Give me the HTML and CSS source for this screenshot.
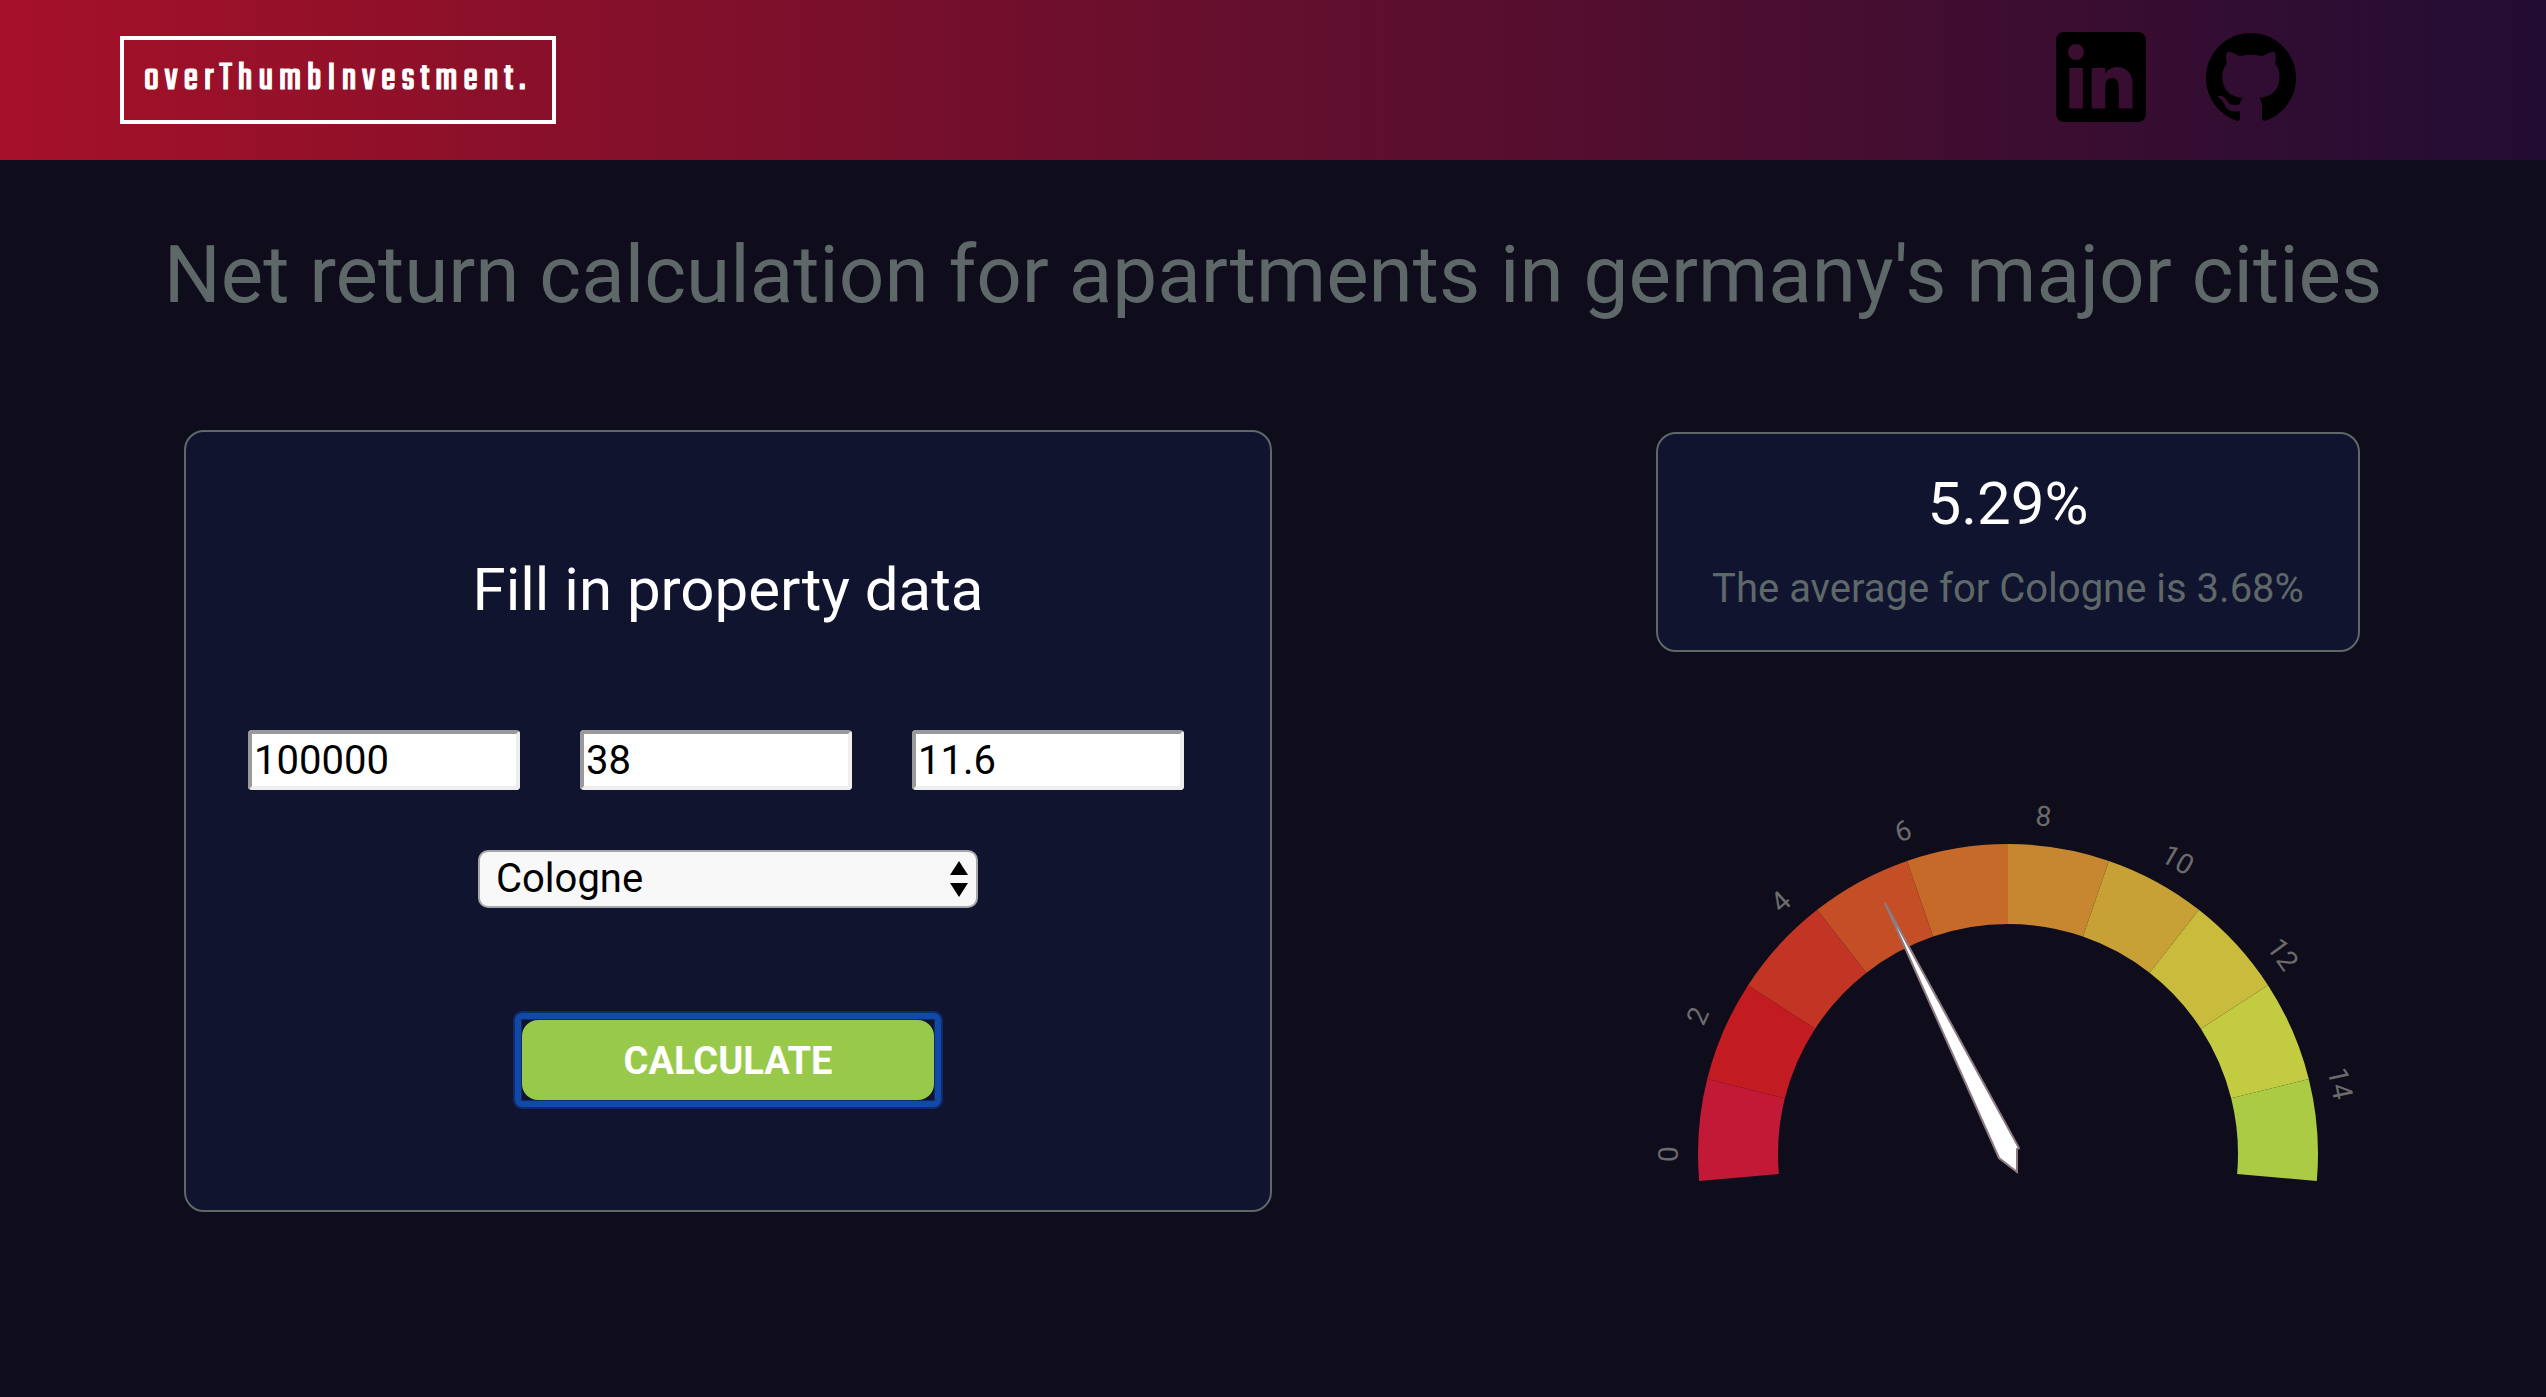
FILE: index.html
```html
<!DOCTYPE html>
<html lang="en">
<head>
<meta charset="utf-8">
<title>overThumbInvestment.</title>
<link rel="stylesheet" href="styles.css">
</head>
<body>
<header class="topbar">
  <a class="logo" href="#">overThumbInvestment.</a>
  <nav class="social">
    <a href="#" aria-label="LinkedIn"><svg class="icon" viewBox="0 0 90 90"><path fill-rule="evenodd" d="M8 0h74a8 8 0 0 1 8 8v74a8 8 0 0 1-8 8H8a8 8 0 0 1-8-8V8a8 8 0 0 1 8-8zM20 12a8 8 0 1 0 0 16a8 8 0 1 0 0-16zM13.400 36v40.400h13.400V36zM35.700 36v40.400h13.600V55C49.300 49 52 46 56 46s6.800 3 6.800 9v21.400h13.700V52C76.500 41 70 35 61 35c-5.500 0-9.500 3-11.700 7V36z"/></svg></a>
    <a href="#" aria-label="GitHub"><svg class="icon" viewBox="0 0 24 24"><path d="M12 .297c-6.63 0-12 5.373-12 12 0 5.303 3.438 9.8 8.205 11.385.6.113.82-.258.82-.577 0-.285-.01-1.04-.015-2.04-3.338.724-4.042-1.61-4.042-1.61C4.422 18.07 3.633 17.7 3.633 17.7c-1.087-.744.084-.729.084-.729 1.205.084 1.838 1.236 1.838 1.236 1.07 1.835 2.809 1.305 3.495.998.108-.776.417-1.305.76-1.605-2.665-.3-5.466-1.332-5.466-5.93 0-1.31.465-2.38 1.235-3.22-.135-.303-.54-1.523.105-3.176 0 0 1.005-.322 3.3 1.23.96-.267 1.98-.399 3-.405 1.02.006 2.04.138 3 .405 2.28-1.552 3.285-1.23 3.285-1.23.645 1.653.24 2.873.12 3.176.765.84 1.23 1.91 1.23 3.22 0 4.61-2.805 5.625-5.475 5.92.42.36.81 1.096.81 2.22 0 1.606-.015 2.896-.015 3.286 0 .315.21.69.825.57C20.565 22.092 24 17.592 24 12.297c0-6.627-5.373-12-12-12"/></svg></a>
  </nav>
</header>
<main>
  <h1 class="title">Net return calculation for apartments in germany's major cities</h1>
  <div class="columns">
    <form class="card form">
      <h2 class="form-title">Fill in property data</h2>
      <div class="fields">
        <input class="field" type="text" value="100000" aria-label="Price">
        <input class="field" type="text" value="38" aria-label="Size">
        <input class="field" type="text" value="11.6" aria-label="Rent per square meter">
      </div>
      <div class="picker">
        <select class="city" aria-label="City"><option>Cologne</option></select>
        <svg class="arrows" viewBox="0 0 18 36"><path d="M9 0l9 14H0zM0 22h18L9 36z"/></svg>
      </div>
      <button type="button" class="calculate">CALCULATE</button>
    </form>
    <section class="results">
      <div class="card result">
        <p class="rate">5.29%</p>
        <p class="average">The average for Cologne is 3.68%</p>
      </div>
      <svg class="gauge" viewBox="0 0 704 400" role="img" aria-label="Net return gauge">
        <g id="sectors" transform="translate(352 362)"></g>
        <g class="ticks" transform="translate(352 362)">
          <text transform="rotate(-90) translate(0 -330)">0</text>
          <text transform="rotate(-66) translate(0 -330)">2</text>
          <text transform="rotate(-42) translate(0 -330)">4</text>
          <text transform="rotate(-18) translate(0 -330)">6</text>
          <text transform="rotate(6) translate(0 -330)">8</text>
          <text transform="rotate(30) translate(0 -330)">10</text>
          <text transform="rotate(54) translate(0 -330)">12</text>
          <text transform="rotate(78) translate(0 -330)">14</text>
        </g>
        <path class="needle" d="M229 111L363 356L361 357V380L343 366z"/>
      </svg>
    </section>
  </div>
</main>
<script src="gauge.js"></script>
</body>
</html>
```
FILE: gauge.js
```
const colors = ["#c21a36", "#c21c22", "#c23423", "#c44f27", "#c66a2a", "#c78730", "#c8a136", "#c9bb3c", "#c3cb41", "#accb44"];
const start = 185, step = 19;
const point = (radius, degrees) => {
  const a = degrees * Math.PI / 180;
  return (radius * Math.cos(a)).toFixed(2) + " " + (-radius * Math.sin(a)).toFixed(2);
};
const group = document.getElementById("sectors");
colors.forEach((color, i) => {
  const a = start - i * step, b = a - step;
  const path = document.createElementNS("http://www.w3.org/2000/svg", "path");
  path.setAttribute("d", `M${point(310, a)}A310 310 0 0 1 ${point(310, b)}L${point(230, b)}A230 230 0 0 0 ${point(230, a)}z`);
  path.setAttribute("fill", color);
  group.appendChild(path);
});
```
FILE: styles.css
```css
* { box-sizing: border-box; }
body {
  margin: 0;
  background: #0f0c1b;
  color: #fff;
  font-family: Roboto, sans-serif;
}
h1, h2, p { margin: 0; font-weight: 400; }

.topbar {
  display: flex;
  justify-content: space-between;
  align-items: flex-start;
  padding: 32px 250px 36px 120px;
  background: linear-gradient(to right, #a51128, #220c33);
}
.logo {
  margin-top: 4px;
  padding: 4px 20px;
  border: 4px solid #fff;
  color: #fff;
  font: 400 40px/72px Teko, "Roboto Condensed", Roboto, sans-serif;
  letter-spacing: 6px;
  -webkit-text-stroke: 1px #fff;
  text-decoration: none;
  white-space: nowrap;
}
.social { display: flex; gap: 60px; }
.icon { display: block; width: 90px; height: 90px; fill: #000; }

.title {
  padding: 67px 40px 0;
  color: #5f6868;
  font-size: 80px;
  line-height: 96px;
  text-align: center;
}
.columns {
  display: flex;
  justify-content: space-between;
  align-items: flex-start;
  padding: 107px 186px 0 184px;
}
.card {
  border: 2px solid #5f6868;
  border-radius: 20px;
  background: #10142f;
}

.form {
  width: 50%;
  padding: 120px 20px 110px;
  display: flex;
  flex-direction: column;
  align-items: center;
}
.form-title { font-size: 60px; line-height: 76px; }
.fields {
  display: flex;
  gap: 60px;
  margin: 102px 24px 60px 0;
}
.field {
  width: 272px;
  height: 60px;
  padding: 0 2px;
  border: 4px solid;
  border-color: #9a9a9a #eee #eee #9a9a9a;
  border-radius: 4px;
  background: #fff;
  color: #000;
  font: 40px Roboto, sans-serif;
}
.picker { position: relative; width: 500px; }
.city {
  display: block;
  width: 100%;
  height: 58px;
  padding: 0 16px 2px;
  border: 2px solid #a6a6a6;
  border-radius: 10px;
  appearance: none;
  background: #f8f8f8;
  color: #000;
  font: 40px Roboto, sans-serif;
}
.arrows {
  position: absolute;
  top: 11px;
  right: 10px;
  width: 18px;
  height: 36px;
  pointer-events: none;
}
.calculate {
  position: relative;
  width: 412px;
  height: 80px;
  margin-top: 112px;
  padding: 2px 0 0;
  border: 0;
  border-radius: 16px;
  background: #99c94a;
  color: #fff;
  font: 700 38px Roboto, sans-serif;
}
.calculate::after {
  content: "";
  position: absolute;
  inset: -7px;
  border: 6px solid #104aa8;
  border-radius: 7px;
  box-shadow: 0 0 0 2px #112a68, inset 0 0 0 1px #112a68;
}

.results { margin-top: 2px; }
.result { padding: 29px 54px 37px; text-align: center; }
.rate { font-size: 60px; line-height: 82px; }
.average { color: #5f6868; font-size: 40px; line-height: 48px; margin-top: 20px; }
.gauge { display: block; width: 704px; margin: 140px auto 0; overflow: visible; }
.ticks { fill: #6b6b6b; font-size: 28px; text-anchor: middle; }
.needle { fill: #fff; stroke: #8c7b80; stroke-width: 2px; }
```
